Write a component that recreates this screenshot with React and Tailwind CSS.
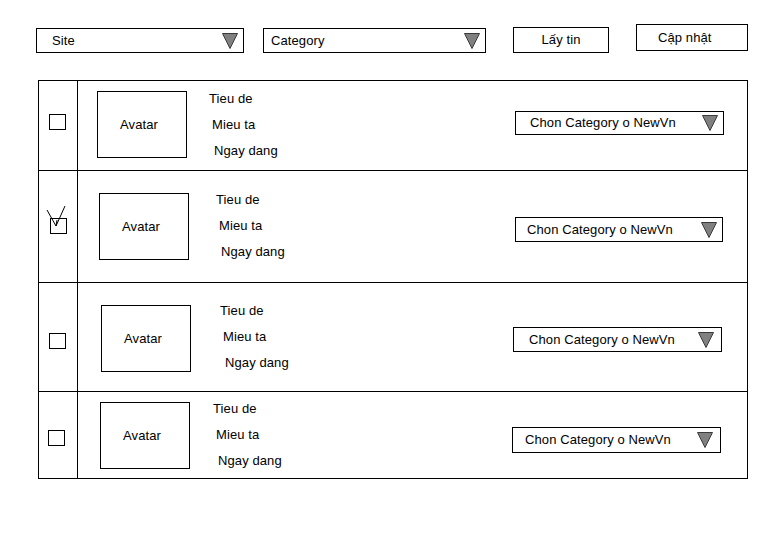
import React from "react";

const Tri = () => (
  <svg width="16" height="16" viewBox="0 0 16 16" className="shrink-0">
    <polygon points="0.5,0.5 15.5,0.5 8,15.5" fill="#808080" stroke="#3a3a3a" strokeWidth="1" />
  </svg>
);

const rows = [
  {
    row: "h-[90px] border-b",
    cb: "mt-[33px] ml-[10px]",
    checked: false,
    av: "mt-[10px] ml-[19px]",
    tx: "mt-[5px] ml-[22px]",
    dd: "mt-[30px] mr-[23px] w-[209px] h-[24px] pl-[14px] pr-[5px]",
  },
  {
    row: "h-[112px] border-b",
    cb: "mt-[47px] ml-[11px]",
    checked: true,
    av: "mt-[22px] ml-[21px]",
    tx: "mt-[16px] ml-[27px]",
    dd: "mt-[46px] mr-[24px] w-[208px] h-[25px] pl-[11px] pr-[5px]",
  },
  {
    row: "h-[109px] border-b",
    cb: "mt-[50px] ml-[10px]",
    checked: false,
    av: "mt-[22px] ml-[23px]",
    tx: "mt-[15px] ml-[29px]",
    dd: "mt-[44px] mr-[25px] w-[209px] h-[25px] pl-[15px] pr-[7px]",
  },
  {
    row: "h-[86px]",
    cb: "mt-[38px] ml-[9px]",
    checked: false,
    av: "mt-[10px] ml-[22px]",
    tx: "mt-[4px] ml-[23px]",
    dd: "mt-[35px] mr-[26px] w-[209px] h-[26px] pl-[12px] pr-[7px]",
  },
];

export default function App() {
  return (
    <div className="w-[783px] h-[534px] bg-white text-black text-[13px] tracking-[0.1px] font-['Liberation_Sans',Arial,sans-serif] overflow-hidden">
      {/* Top bar */}
      <div className="flex items-start h-[80px] pt-[24px] pl-[36px]">
        <div className="mt-[4px] w-[208px] h-[25px] border border-black flex items-center justify-between pl-[15px] pr-[5px]">
          <span>Site</span>
          <Tri />
        </div>
        <div className="mt-[4px] ml-[19px] w-[223px] h-[25px] border border-black flex items-center justify-between pl-[7px] pr-[5px]">
          <span>Category</span>
          <Tri />
        </div>
        <div className="mt-[3px] ml-[27px] w-[96px] h-[26px] border border-black flex items-center justify-center">
          <span>Lấy tin</span>
        </div>
        <div className="ml-[27px] w-[112px] h-[27px] border border-black flex items-center pl-[21px]">
          <span>Cập nhật</span>
        </div>
      </div>

      {/* Table */}
      <div className="ml-[38px] w-[710px] border border-black flex flex-col">
        {rows.map((r, i) => (
          <div key={i} className={`flex border-black ${r.row}`}>
            <div className="w-[39px] shrink-0 border-r border-black">
              <div className={`relative w-[17px] h-[16px] border border-black ${r.cb}`}>
                {r.checked && (
                  <svg
                    width="22"
                    height="24"
                    viewBox="0 0 22 24"
                    className="absolute left-[-5px] top-[-14px] overflow-visible"
                  >
                    <polyline points="1,5 10,21 19,1" fill="none" stroke="#000" strokeWidth="1" />
                    <line x1="10" y1="21" x2="11" y2="15" stroke="#000" strokeWidth="1" />
                  </svg>
                )}
              </div>
            </div>
            <div className={`w-[90px] h-[67px] shrink-0 border border-black flex items-center justify-center ${r.av}`}>
              <span className="pr-[6px]">Avatar</span>
            </div>
            <div className={`flex flex-col ${r.tx}`}>
              <div className="h-[26px] leading-[26px]">Tieu de</div>
              <div className="h-[26px] leading-[26px] pl-[3px]">Mieu ta</div>
              <div className="h-[26px] leading-[26px] pl-[5px]">Ngay dang</div>
            </div>
            <div className={`ml-auto shrink-0 border border-black flex items-center justify-between ${r.dd}`}>
              <span>Chon Category o NewVn</span>
              <Tri />
            </div>
          </div>
        ))}
      </div>
    </div>
  );
}
